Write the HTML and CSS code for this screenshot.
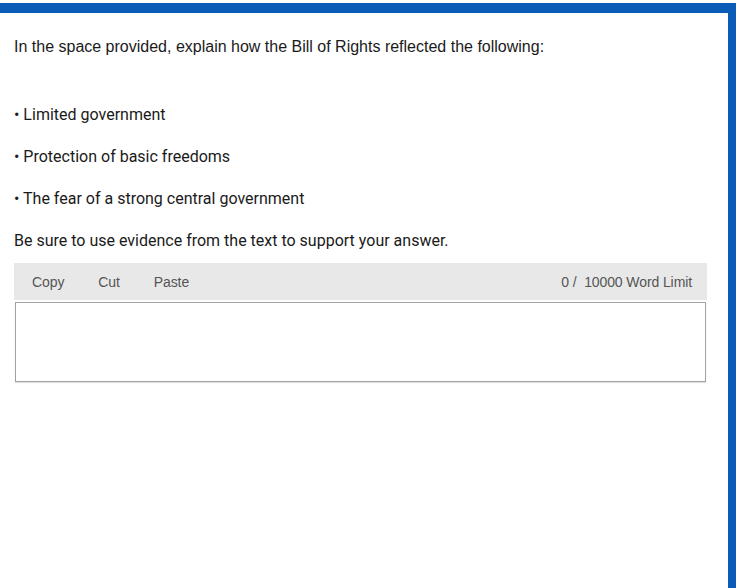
FILE: index.html
```html
<!DOCTYPE html>
<html>
<head>
<meta charset="utf-8">
<link rel="stylesheet" href="styles.css">
</head>
<body>
<div class="frame">
  <p class="prompt">In the space provided, explain how the Bill of Rights reflected the following:</p>
  <ul class="items">
    <li>• Limited government</li>
    <li>• Protection of basic freedoms</li>
    <li>• The fear of a strong central government</li>
  </ul>
  <p class="note">Be sure to use evidence from the text to support your answer.</p>
  <div class="editor">
    <div class="toolbar">
      <div class="tools">
        <span class="tool">Copy</span>
        <span class="tool">Cut</span>
        <span class="tool">Paste</span>
      </div>
      <span class="limit">0 /&nbsp; 10000 Word Limit</span>
    </div>
    <div class="answer"></div>
  </div>
</div>
</body>
</html>
```

FILE: styles.css
```css
html, body {
  margin: 0;
  padding: 0;
  background: #fff;
  height: 100%;
}
body {
  padding-top: 3px;
  box-sizing: border-box;
}
.frame {
  box-sizing: border-box;
  width: 736px;
  height: 585px;
  border-top: 10px solid #0b5cb8;
  border-right: 8px solid #0b5cb8;
  padding: 24px 21px 0 14px;
  color: #1a1a1a;
}
.prompt {
  margin: 0;
  font-family: "Liberation Sans", Arial, sans-serif;
  font-size: 16px;
  line-height: 20px;
}
.items {
  list-style: none;
  margin: 48px 0 0 0;
  padding: 0;
  font-family: Roboto, "Liberation Sans", sans-serif;
  font-size: 16px;
  line-height: 20px;
  display: flex;
  flex-direction: column;
  gap: 22px;
}
.note {
  margin: 22px 0 0 0;
  font-family: Roboto, "Liberation Sans", sans-serif;
  font-size: 16px;
  line-height: 20px;
}
.editor {
  margin-top: 12px;
}
.toolbar {
  height: 37px;
  background: #e8e8e8;
  display: flex;
  align-items: center;
  justify-content: space-between;
  padding: 0 15px 0 18px;
  font-family: "Liberation Sans", Arial, sans-serif;
  font-size: 14px;
  letter-spacing: -0.1px;
  color: #555;
}
.tools {
  display: flex;
  gap: 34px;
}
.answer {
  margin: 2px 1px 0 1px;
  height: 78px;
  border: 1px solid #a3a3a3;
  box-shadow: 0 1px 1px rgba(0,0,0,0.12);
}
```
